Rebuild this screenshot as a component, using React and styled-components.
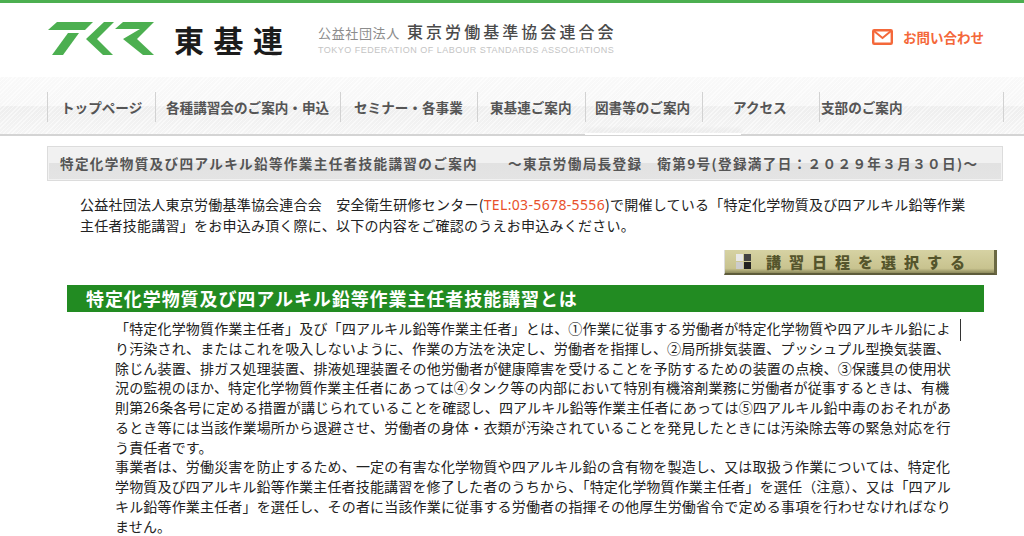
import React from "react";
import styled, { createGlobalStyle } from "styled-components";

const Global = createGlobalStyle`
  html, body { margin: 0; padding: 0; background: #fff; overflow: hidden; }
  body { font-family: "Noto Sans CJK JP", "Noto Sans", sans-serif; width: 1024px; height: 536px; }
`;
const Page = styled.div`
  width: 1024px; height: 536px; overflow: hidden; border-top: 3px solid #4caf50; box-sizing: border-box;
`;
const Header = styled.header`
  height: 74px; display: flex; align-items: center; padding-left: 47px; padding-right: 40px;
`;
const BrandMark = styled.svg`width: 107px; height: 34px; flex: none; margin-top: -3px;`;
const BrandName = styled.div`
  font-size: 30px; font-weight: 700; color: #1c1c1c; letter-spacing: 9.5px; margin-left: 20px; line-height: 36px; width: 124px; flex: none; margin-top: -3px;
`;
const Org = styled.div`display: flex; flex-direction: column; margin-left: 20px; margin-top: -4px;`;
const OrgTop = styled.div`display: flex; align-items: baseline; line-height: 22px; white-space: nowrap;`;
const OrgKind = styled.span`font-size: 13px; color: #8c8c8c; letter-spacing: 0.65px; width: 89px;`;
const OrgName = styled.span`font-size: 16px; font-weight: 500; color: #4a4a4a; letter-spacing: 3.05px;`;
const OrgEn = styled.div`
  font-family: "Liberation Sans", sans-serif; font-size: 9px; line-height: 12px; letter-spacing: 0.5px; color: #c4c4c4; white-space: nowrap;
`;
const Contact = styled.a`
  margin-left: auto; display: flex; align-items: center; gap: 10px; color: #f4683a; font-size: 13.5px; font-weight: 700; white-space: nowrap; margin-top: -7px;
`;
const Nav = styled.nav`
  height: 59px; box-sizing: border-box; border-bottom: 2px solid #d4d4d4; padding: 15px 20px 0 47px; position: relative;
  background:
    repeating-linear-gradient(135deg, rgba(255,255,255,.45) 0 1px, rgba(0,0,0,.006) 1px 3px),
    linear-gradient(#fbfbfb 0, #f9f9f9 50%, #f0f0f0 52%, #f7f7f7 100%);
  display: flex; align-items: flex-start;
`;
const NavItem = styled.a`
  height: 30px; box-sizing: content-box; width: ${p => p.$w}px; flex: none; border-left: 1px solid #d2d2d2;
  font-size: 13.6px; font-weight: 700; color: #555; line-height: 30px; white-space: nowrap;
  padding-left: ${p => p.$pad}px;
`;
const NavEnd = styled.div`height: 30px; width: 1px; background: #d2d2d2; flex: none;`;
const ActiveTab = styled.div`
  position: absolute; left: 585px; top: 56px; width: 156px; height: 2px; background: #fff; box-shadow: 0 -3px 5px rgba(0,0,0,.1);
`;
const Main = styled.main`padding: 10px 21px 0 47px;`;
const TitleBar = styled.h1`
  margin: 0; height: 35px; box-sizing: border-box; border: 1px solid #dcdcdc; box-shadow: inset 0 0 0 1px #f2f2f2;
  background: linear-gradient(#f1f1f1 0, #f1f1f1 48%, #e2e2e2 50%, #e4e4e4 100%);
  font-size: 13.6px; font-weight: 700; color: #555; line-height: 33px; padding-left: 12px; white-space: nowrap;
  letter-spacing: 1.34px; display: flex; gap: 30px;
`;
const Lead = styled.p`
  margin: 13px 0 0 33px; font-size: 14px; line-height: 21px; color: #222; letter-spacing: 0.24px;
`;
const Line = styled.span`display: block; white-space: nowrap;`;
const Tel = styled.span`color: #e8502a; font-family: "Noto Sans", sans-serif; letter-spacing: .35px;`;
const ButtonRow = styled.div`display: flex; justify-content: flex-end; padding: 14px 6px 0 0;`;
const SelectButton = styled.a`
  width: 273px; height: 25px; box-sizing: border-box; display: flex; align-items: center; padding-left: 11px; gap: 15px;
  background: linear-gradient(#d6d2a3, #c8c38f 80%, #8d8a5c);
  border-right: 3px solid #6b6943; border-bottom: 2px solid #5e5c3b; border-left: 1px solid #ddd;
  color: #55552c; font-size: 15px; font-weight: 900; letter-spacing: 8px; white-space: nowrap;
`;
const Squares = styled.span`
  width: 15px; height: 15px; display: grid; grid-template-columns: 1fr 1fr; gap: 1px; flex: none;
`;
const Square = styled.i`background: ${p => p.$c};`;
const SectionHead = styled.h2`
  margin: 10px 19px 0 20px; height: 27px; background: #228b22; color: #fff; font-size: 18px; font-weight: 700; line-height: 27px;
  padding-left: 19px; white-space: nowrap; letter-spacing: .92px;
`;
const Body = styled.div`
  position: relative; margin: 7px 0 0 68px; font-size: 14px; line-height: 19.75px; color: #222; letter-spacing: 0.17px;
`;
const Caret = styled.div`position: absolute; left: 845px; top: 0; width: 1px; height: 22px; background: #333;`;

const lines1 = [
  "「特定化学物質作業主任者」及び「四アルキル鉛等作業主任者」とは、①作業に従事する労働者が特定化学物質や四アルキル鉛によ",
  "り汚染され、またはこれを吸入しないように、作業の方法を決定し、労働者を指揮し、②局所排気装置、プッシュプル型換気装置、",
  "除じん装置、排ガス処理装置、排液処理装置その他労働者が健康障害を受けることを予防するための装置の点検、③保護具の使用状",
  "況の監視のほか、特定化学物質作業主任者にあっては④タンク等の内部において特別有機溶剤業務に労働者が従事するときは、有機",
  "則第26条各号に定める措置が講じられていることを確認し、四アルキル鉛等作業主任者にあっては⑤四アルキル鉛中毒のおそれがあ",
  "るとき等には当該作業場所から退避させ、労働者の身体・衣類が汚染されていることを発見したときには汚染除去等の緊急対応を行",
  "う責任者です。",
  "事業者は、労働災害を防止するため、一定の有害な化学物質や四アルキル鉛の含有物を製造し、又は取扱う作業については、特定化",
  "学物質及び四アルキル鉛等作業主任者技能講習を修了した者のうちから、「特定化学物質作業主任者」を選任（注意）、又は「四アル",
  "キル鉛等作業主任者」を選任し、その者に当該作業に従事する労働者の指揮その他厚生労働省令で定める事項を行わせなければなり",
  "ません。",
];

const navs = [
  ["トップページ", 107, 13], ["各種講習会のご案内・申込", 184, 10], ["セミナー・各事業", 136, 13],
  ["東基連ご案内", 107, 12], ["図書等のご案内", 116, 9], ["アクセス", 116, 30], ["支部のご案内", 183, 1],
];

export default function App() {
  return (
    <Page>
      <Global />
      <Header>
        <BrandMark viewBox="0 0 107 34" aria-label="TKR">
          <g fill="#4caf50">
            <polygon points="10,0 46,0 38,8 1,8" />
            <polygon points="21,11 32,11 16,33 5,33" />
            <polygon points="57,0 67,0 50,17 66,33 56,33 39,17" />
            <polygon points="76,0 107,0 90,17 107,33 96,33 76,17 93,7 68,7" />
          </g>
        </BrandMark>
        <BrandName>東基連</BrandName>
        <Org>
          <OrgTop><OrgKind>公益社団法人</OrgKind><OrgName>東京労働基準協会連合会</OrgName></OrgTop>
          <OrgEn>TOKYO FEDERATION OF LABOUR STANDARDS ASSOCIATIONS</OrgEn>
        </Org>
        <Contact>
          <svg width="21" height="16" viewBox="0 0 21 16">
            <rect x="1.2" y="1.2" width="18.6" height="13.6" rx="1" fill="none" stroke="#f4683a" strokeWidth="2.4" />
            <path d="M2 2l8.5 7L19 2" fill="none" stroke="#f4683a" strokeWidth="2" />
          </svg>
          お問い合わせ
        </Contact>
      </Header>
      <Nav>
        {navs.map(([t, w, p]) => <NavItem key={t} $w={w - p} $pad={p}>{t}</NavItem>)}
        <NavEnd />
        <ActiveTab />
      </Nav>
      <Main>
        <TitleBar>
          <span>特定化学物質及び四アルキル鉛等作業主任者技能講習のご案内</span>
          <span>～東京労働局長登録　衛第9号(登録満了日：２０２９年３月３０日)～</span>
        </TitleBar>
        <Lead>
          <Line>公益社団法人東京労働基準協会連合会　安全衛生研修センター(<Tel>TEL:03-5678-5556</Tel>)で開催している「特定化学物質及び四アルキル鉛等作業</Line>
          <Line>主任者技能講習」をお申込み頂く際に、以下の内容をご確認のうえお申込みください。</Line>
        </Lead>
        <ButtonRow>
          <SelectButton>
            <Squares><Square $c="#e8e8e8" /><Square $c="#444" /><Square $c="#ccc" /><Square $c="#222" /></Squares>
            講習日程を選択する
          </SelectButton>
        </ButtonRow>
        <SectionHead>特定化学物質及び四アルキル鉛等作業主任者技能講習とは</SectionHead>
        <Body>
          {lines1.map((l, i) => <Line key={i}>{l}</Line>)}
          <Caret />
        </Body>
      </Main>
    </Page>
  );
}
